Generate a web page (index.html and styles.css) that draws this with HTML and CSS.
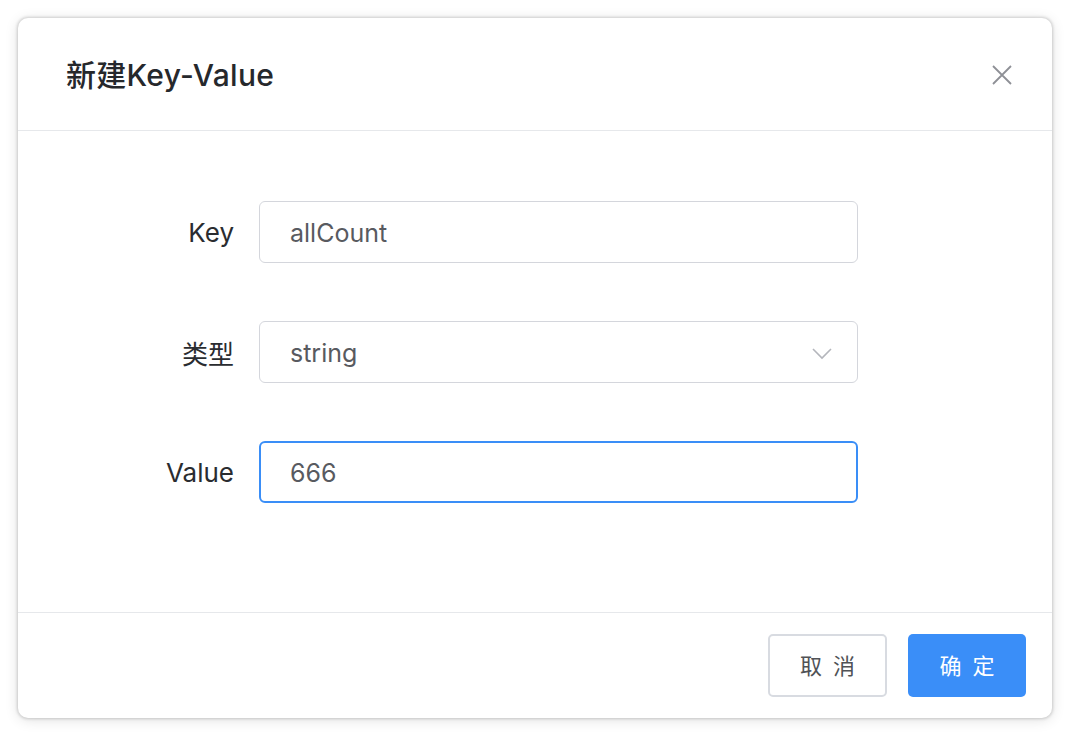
FILE: index.html
```html
<!DOCTYPE html>
<html lang="zh">
<head>
<meta charset="utf-8">
<link rel="stylesheet" href="styles.css">
</head>
<body>
<div class="dialog">
  <div class="dialog-header">
    <span class="dialog-title">新建Key-Value</span>
    <button class="dialog-close" aria-label="关闭">
      <svg width="20" height="20" viewBox="0 0 20 20"><path d="M1 1 L19 19 M19 1 L1 19" stroke="#8e9096" stroke-width="1.8" fill="none"/></svg>
    </button>
  </div>
  <div class="dialog-body">
    <div class="form-row">
      <label class="form-label">Key</label>
      <div class="input">allCount</div>
    </div>
    <div class="form-row">
      <label class="form-label">类型</label>
      <div class="input select">string
        <svg class="arrow" width="20" height="12" viewBox="0 0 20 12"><path d="M1 1 L10 10 L19 1" stroke="#b4b6bc" stroke-width="1.6" fill="none"/></svg>
      </div>
    </div>
    <div class="form-row">
      <label class="form-label">Value</label>
      <div class="input focused">666</div>
    </div>
  </div>
  <div class="dialog-footer">
    <button class="btn btn-default">取 消</button>
    <button class="btn btn-primary">确 定</button>
  </div>
</div>
</body>
</html>
```

FILE: styles.css
```css
html, body {
  margin: 0;
  padding: 0;
  background: #ffffff;
}
body {
  padding: 18px;
  font-family: Inter, "Noto Sans CJK SC", sans-serif;
  color: #303133;
}
.dialog {
  width: 1034px;
  height: 700px;
  background: #fff;
  border-radius: 10px;
  box-shadow: 0 0 3px 1px rgba(0,0,0,0.16), 0 2px 14px rgba(0,0,0,0.12);
  display: flex;
  flex-direction: column;
  overflow: hidden;
}
.dialog-header {
  height: 112px;
  border-bottom: 1px solid #e6e8eb;
  display: flex;
  align-items: center;
  justify-content: space-between;
  padding: 0 40px 0 48px;
  box-sizing: content-box;
}
.dialog-title {
  font-size: 30px;
  color: #26282c;
  font-weight: 500;
  letter-spacing: 0.3px;
  margin-top: -2px;
}
.dialog-close {
  border: none;
  background: none;
  padding: 0;
  width: 20px;
  height: 20px;
  display: flex;
  margin-top: 1px;
}
.dialog-body {
  flex: 1;
  padding-top: 70px;
  display: flex;
  flex-direction: column;
  gap: 58px;
}
.form-row {
  display: flex;
  align-items: center;
}
.form-label {
  width: 216px;
  text-align: right;
  padding-right: 25px;
  font-size: 26px;
  color: #2a2c30;
}
.input {
  width: 599px;
  height: 62px;
  box-sizing: border-box;
  border: 1px solid #d4d6dc;
  border-radius: 6px;
  padding: 0 31px 0 30px;
  font-size: 25px;
  color: #585a60;
  display: flex;
  align-items: center;
  justify-content: space-between;
  padding-top: 1px;
}
.input.select .arrow {
  margin-right: -6px;
  margin-top: 2px;
}
.input.focused {
  border: 2px solid #3a8ef7;
  padding-left: 29px;
}
.dialog-footer {
  border-top: 1px solid #e6e8eb;
  height: 105px;
  display: flex;
  justify-content: flex-end;
  align-items: center;
  gap: 21px;
  padding-right: 26px;
}
.btn {
  width: 119px;
  height: 63px;
  border-radius: 5px;
  font-size: 22px;
  font-family: "Noto Sans CJK SC", sans-serif;
  letter-spacing: 3px;
  padding: 0 0 3px 3px;
  cursor: pointer;
}
.btn-default {
  background: #fff;
  border: 2px solid #d8dbe1;
  color: #505256;
}
.btn-primary {
  width: 118px;
  background: #3a8ef8;
  border: none;
  color: #fff;
}
```
